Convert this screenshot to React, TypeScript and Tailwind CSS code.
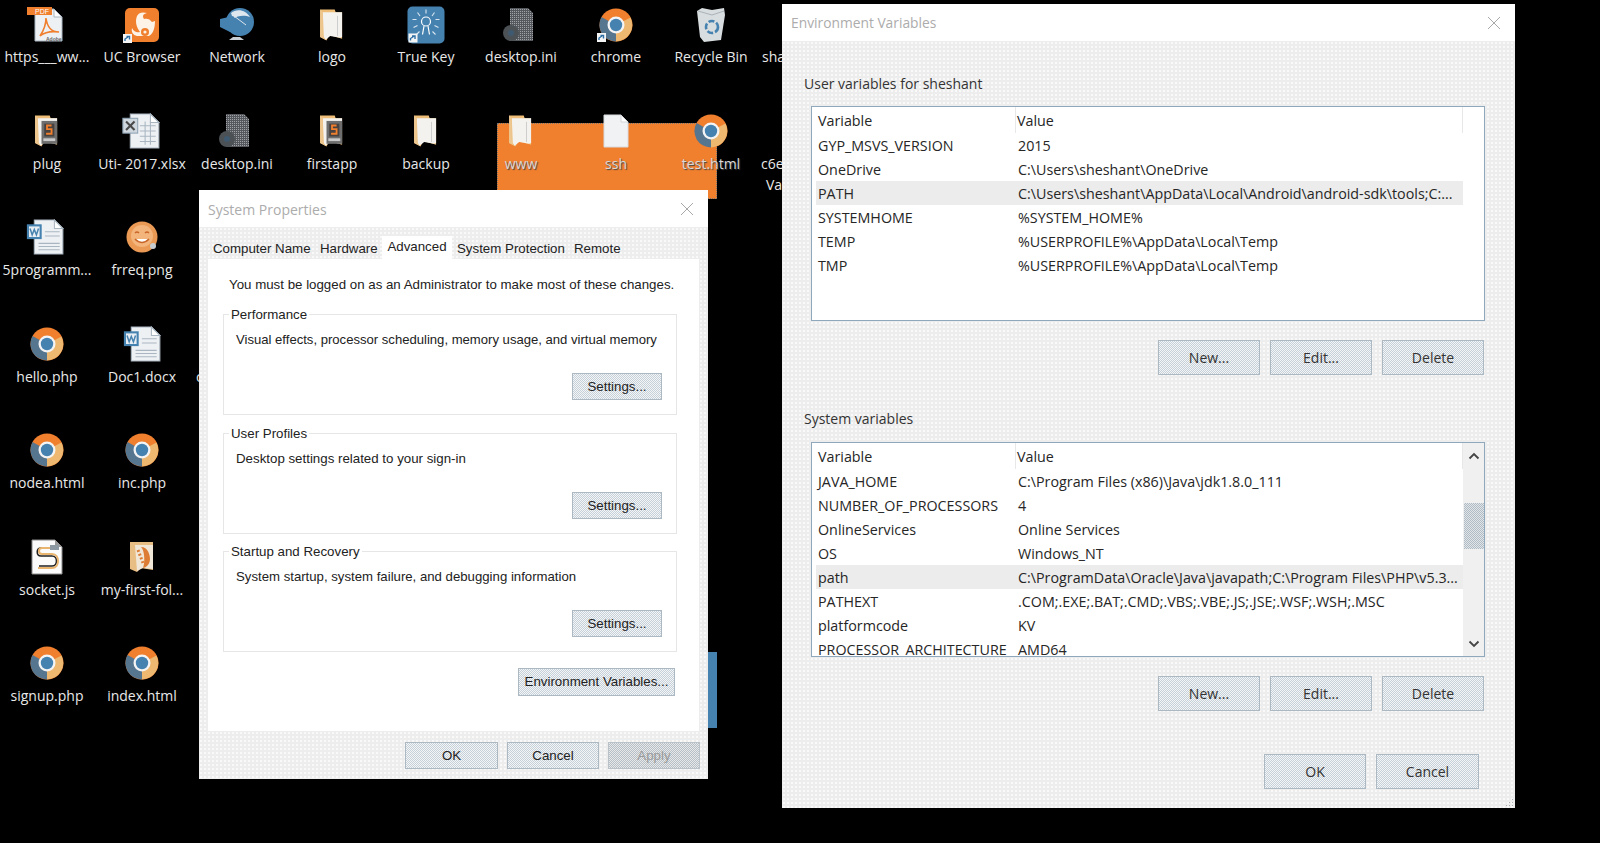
import React from "react";

const seg = "font-['Open_Sans','Noto_Sans',sans-serif]";
const ari = "font-['Liberation_Sans',Arial,sans-serif]";
const btnBg =
  "bg-[repeating-conic-gradient(#c6d0d8_0_25%,#f4f5f6_0_50%)] bg-[length:2px_2px] border border-[#adb9c2]";
const dialogBg =
  "bg-[#ededed] bg-[radial-gradient(circle,#fafafa_0.7px,transparent_0.9px)] bg-[length:4px_4px]";

const Shortcut = ({ x, y }: { x: number; y: number }) => (
  <g transform={`translate(${x} ${y})`}>
    <rect width="9" height="9" fill="#f4f4f4" />
    <path d="M2 7 L2 5 L5 3 M3.5 2.5 H6.5 V5.5" stroke="#2c6ea5" strokeWidth="1.4" fill="none" />
  </g>
);

const Chrome = ({ s = 34, shortcut = false }: { s?: number; shortcut?: boolean }) => (
  <svg width={s} height={s} viewBox="0 0 34 34" className="overflow-visible">
    <circle cx="17" cy="17" r="16.5" fill="#f07f2e" />
    <path d="M17 17 L31.5 9.5 A16.5 16.5 0 0 1 17 33.5 Z" fill="#eeb870" />
    <path d="M17 17 L2.5 9 A16.5 16.5 0 0 0 17 33.5 Z" fill="#56758f" />
    <circle cx="17" cy="17" r="8.5" fill="#f4f4f4" />
    <circle cx="17" cy="17" r="6.2" fill="#4682b0" />
    {shortcut && <Shortcut x={-2} y={25} />}
  </svg>
);

const Folder = ({ inner }: { inner?: React.ReactNode }) => (
  <svg width="26" height="33" viewBox="0 0 28 36">
    <path d="M1 1 H17 L18 4 H25 V33 L11 29 L8 35 L1 31 Z" fill="#eebd78" />
    <path d="M4 4 H25 V31 L23 32 L12 30 L7 34 L5 31 Z" fill="#f4f2ee" />
    <path d="M1 1 L4 4 V30 L7 34 L1 31 Z" fill="#edc78f" />
    <path d="M20 8 V30" stroke="#c9c9c9" />
    {inner}
  </svg>
);

const FolderSub = () => (
  <Folder
    inner={
      <>
        <rect x="8" y="7" width="17" height="25" fill="#6e6e6e" />
        <rect x="11" y="10" width="11" height="14" fill="#47423f" />
        <path d="M19 12 H14 V16 H19 V21 H13" stroke="#f07f2e" strokeWidth="2" fill="none" />
        <rect x="10" y="26" width="13" height="3" fill="#c9c9c9" />
      </>
    }
  />
);

const FilePage = ({ children, w = 34, h = 34 }: { children?: React.ReactNode; w?: number; h?: number }) => (
  <svg width={w} height={h} viewBox="0 0 34 34" className="overflow-visible">
    <path d="M5 1 H24 L32 9 V33 H5 Z" fill="#eef1f4" stroke="#a9b6c1" />
    <path d="M24 1 V9 H32 Z" fill="#fff" stroke="#a9b6c1" />
    {children}
  </svg>
);

const Pdf = () => (
  <FilePage>
    <rect x="-3" y="-1" width="25" height="8" fill="#f07f2e" />
    <text x="5" y="6" fontSize="7" fill="#fff" fontFamily="Liberation Sans">PDF</text>
    <path d="M10 28 C14 22 16 14 16 10 C17 18 21 24 29 24 C22 23 15 24 10 28 Z" fill="none" stroke="#f07f2e" strokeWidth="1.6" />
    <text x="16" y="33" fontSize="5" fontWeight="700" fill="#666" fontFamily="Liberation Sans">Adobe</text>
  </FilePage>
);

const Uc = () => (
  <svg width="34" height="34" viewBox="0 0 34 34" className="overflow-visible">
    <rect width="34" height="34" rx="5" fill="#f07f2e" />
    <path d="M12 8 C14 4 18 4 22 5 C18 6 17 8 19 11 C22 10 25 11 27 14 L30 13 C30 20 28 26 24 28 H12 C8 27 6 24 7 20 C9 24 12 25 15 24 C11 19 10 13 12 8 Z" fill="#fdf3e7" />
    <circle cx="20" cy="24" r="4" fill="#f07f2e" />
    <circle cx="20" cy="24" r="1.6" fill="#fdf3e7" />
    <Shortcut x={-2} y={26} />
  </svg>
);

const Globe = () => (
  <svg width="34" height="36" viewBox="0 0 34 36">
    <circle cx="20" cy="15" r="14" fill="#4682b0" />
    <path d="M11 6 C17 1 26 3 30 10 C25 8 18 8 13 12 Z" fill="#dfe7ee" />
    <path d="M0 12 L13 9 L24 21 L22 25 L10 25 L0 20 Z" fill="#4682b0" />
    <path d="M9 33 H24 L20 30 H13 Z" fill="#c9ced2" />
    <path d="M14 9 L26 18" stroke="#dfe7ee" />
  </svg>
);

const TrueKey = () => (
  <svg width="37" height="37" viewBox="0 0 37 37" className="overflow-visible">
    <rect width="37" height="37" rx="5" fill="#4682b0" />
    <circle cx="18.5" cy="15" r="4.5" fill="none" stroke="#fff" strokeWidth="1.2" />
    <path d="M16.5 19.5 L15 28 M20.5 19.5 L22 28" stroke="#fff" strokeWidth="1.2" />
    <g stroke="#dbe7f0" strokeWidth="1.1">
      <path d="M18.5 3 V7 M10 6 L12.5 9.5 M27 6 L24.5 9.5 M5 13 H9 M28 13 H32 M6 21 L10 19 M31 21 L27 19 M9 28 L12 25 M28 28 L25 25" />
    </g>
    <Shortcut x={1} y={27} />
  </svg>
);

const Gear = () => (
  <svg width="32" height="36" viewBox="0 0 32 36">
    <defs>
      <pattern id="gd" width="2" height="2" patternUnits="userSpaceOnUse">
        <rect width="2" height="2" fill="#55595d" />
        <rect width="1" height="1" fill="#a0a4a8" />
      </pattern>
    </defs>
    <path d="M8 1 H26 L31 6 V34 H8 Z" fill="url(#gd)" />
    <circle cx="9" cy="26" r="8" fill="#4c5155" />
    <circle cx="9" cy="26" r="3" fill="#3f5a70" />
  </svg>
);

const Recycle = () => (
  <svg width="30" height="36" viewBox="0 0 30 36">
    <path d="M1 4 L6 1 L16 3 L28 1 L29 8 L25 33 L8 35 L4 30 Z" fill="#d8dde0" />
    <path d="M2 4 L16 8 L28 4" stroke="#aab2b8" fill="none" />
    <circle cx="16" cy="20" r="6" fill="none" stroke="#4682b0" strokeWidth="2.6" strokeDasharray="6 2" />
  </svg>
);

const Xlsx = () => (
  <FilePage w={36} h={36}>
    <rect x="-2" y="5" width="14" height="14" fill="#cfd8df" stroke="#8fa3b3" />
    <path d="M1 8 L9 16 M9 8 L1 16" stroke="#4a4a4a" strokeWidth="2" />
    <path d="M14 12 H29 M14 17 H29 M14 22 H29 M14 27 H29 M19 8 V30 M24 8 V30" stroke="#a9b6c1" />
  </FilePage>
);

const Docx = () => (
  <FilePage w={36} h={36}>
    <rect x="-2" y="5" width="14" height="14" fill="#4682b0" />
    <rect x="0" y="7" width="10" height="10" fill="#e8eef3" />
    <path d="M1 9 L3 15 L5 10 L7 15 L9 9" stroke="#4682b0" strokeWidth="1.4" fill="none" />
    <path d="M9 23 H29 M9 26 H29 M9 29 H29 M15 12 H29 M15 16 H29" stroke="#a9b6c1" />
  </FilePage>
);

const Smile = () => (
  <svg width="32" height="32" viewBox="0 0 32 32">
    <circle cx="16" cy="16" r="15.5" fill="#eb9a55" />
    <circle cx="16" cy="15" r="11" fill="#f3b57c" />
    <path d="M9 12 Q11 10 13 12 M19 12 Q21 10 23 12" stroke="#c9662a" strokeWidth="1.4" fill="none" />
    <path d="M9 18 Q16 25 23 18" stroke="#c9662a" strokeWidth="1.6" fill="#fff" />
    <circle cx="27" cy="25" r="3" fill="#c7ccd0" />
  </svg>
);

const Js = () => (
  <svg width="32" height="36" viewBox="0 0 32 36">
    <path d="M1 1 H24 L31 8 V35 H1 Z" fill="#fbfbfb" stroke="#8c8c8c" />
    <path d="M24 1 V8 H31 Z" fill="#9a9a9a" />
    <path d="M23 9 H10 C5 9 5 17 10 17 H21 C27 17 27 27 21 27 H8" stroke="#222" strokeWidth="1.6" fill="none" />
    <path d="M21 9 H11 C7 9 7 15 11 15 H21 C29 15 29 29 21 29 H7" stroke="#e9b46e" strokeWidth="2" fill="none" />
    <rect x="19" y="6" width="9" height="5" fill="#8e9aa3" />
  </svg>
);

const FolderOrange = () => (
  <svg width="26" height="32" viewBox="0 0 26 32">
    <path d="M1 1 H24 V29 L12 27 L8 31 L1 28 Z" fill="#e9be84" />
    <path d="M6 4 H24 V28 L14 27 L8 30 Z" fill="#f1e7d8" />
    <path d="M12 6 C19 6 21 14 21 18 C21 24 16 27 14 27 C16 22 16 10 12 6 Z" fill="#dd7d35" />
    <path d="M9 9 L14 22" stroke="#dd7d35" strokeWidth="3" strokeDasharray="2 2" />
  </svg>
);

const BlankFile = () => (
  <svg width="26" height="34" viewBox="0 0 26 34">
    <path d="M1 1 H18 L25 8 V33 H1 Z" fill="#f1f2f3" stroke="#d8dbde" />
    <path d="M18 1 V8 H25 Z" fill="#fff" stroke="#d0d4d8" />
  </svg>
);

type Item = { x: number; ix?: number; iy: number; ly: number; label: string; icon: React.ReactNode; sel?: boolean };

const col = [47, 142, 237, 332, 426, 521, 616, 711];
const items: Item[] = [
  { x: col[0], iy: 25, ly: 57, label: "https___ww...", icon: <Pdf /> },
  { x: col[1], iy: 25, ly: 57, label: "UC Browser", icon: <Uc /> },
  { x: col[2], iy: 25, ly: 57, label: "Network", icon: <Globe /> },
  { x: col[3], iy: 25, ly: 57, label: "logo", icon: <Folder /> },
  { x: col[4], iy: 25, ly: 57, label: "True Key", icon: <TrueKey /> },
  { x: col[5], ix: -3, iy: 25, ly: 57, label: "desktop.ini", icon: <Gear /> },
  { x: col[6], iy: 25, ly: 57, label: "chrome", icon: <Chrome shortcut /> },
  { x: col[7], iy: 25, ly: 57, label: "Recycle Bin", icon: <Recycle /> },
  { x: col[0], iy: 131, ly: 164, label: "plug", icon: <FolderSub /> },
  { x: col[1], ix: 1, iy: 131, ly: 164, label: "Uti- 2017.xlsx", icon: <Xlsx /> },
  { x: col[2], ix: -3, iy: 131, ly: 164, label: "desktop.ini", icon: <Gear /> },
  { x: col[3], iy: 131, ly: 164, label: "firstapp", icon: <FolderSub /> },
  { x: col[4], iy: 131, ly: 164, label: "backup", icon: <Folder /> },
  { x: col[5], iy: 131, ly: 164, label: "www", icon: <Folder />, sel: true },
  { x: col[6], iy: 131, ly: 164, label: "ssh", icon: <BlankFile />, sel: true },
  { x: col[7], iy: 131, ly: 164, label: "test.html", icon: <Chrome />, sel: true },
  { x: col[0], iy: 237, ly: 270, label: "5programm...", icon: <Docx /> },
  { x: col[1], iy: 237, ly: 270, label: "frreq.png", icon: <Smile /> },
  { x: col[0], iy: 344, ly: 377, label: "hello.php", icon: <Chrome /> },
  { x: col[1], ix: 2, iy: 344, ly: 377, label: "Doc1.docx", icon: <Docx /> },
  { x: col[0], iy: 450, ly: 483, label: "nodea.html", icon: <Chrome /> },
  { x: col[1], iy: 450, ly: 483, label: "inc.php", icon: <Chrome /> },
  { x: col[0], iy: 557, ly: 590, label: "socket.js", icon: <Js /> },
  { x: col[1], iy: 557, ly: 590, label: "my-first-fol...", icon: <FolderOrange /> },
  { x: col[0], iy: 663, ly: 696, label: "signup.php", icon: <Chrome /> },
  { x: col[1], iy: 663, ly: 696, label: "index.html", icon: <Chrome /> },
];

const DesktopIcon = ({ it }: { it: Item }) => (
  <>
    <div className="absolute -translate-x-1/2 -translate-y-1/2" style={{ left: it.x + (it.ix ?? 0), top: it.iy }}>
      {it.icon}
    </div>
    <div
      className={`absolute -translate-x-1/2 -translate-y-1/2 whitespace-nowrap text-[14px] leading-[20px] ${seg} ${
        it.sel ? "text-[#d8d8d8] [text-shadow:1px_1px_1px_#444]" : "text-[#e8e8e8]"
      }`}
      style={{ left: it.x, top: it.ly }}
    >
      {it.label}
    </div>
  </>
);

const Close = () => (
  <svg width="14" height="14" viewBox="0 0 14 14">
    <path d="M1 1 L13 13 M13 1 L1 13" stroke="#a8a8a8" strokeWidth="1" />
  </svg>
);

const WinBtn = ({ label, className = "" }: { label: string; className?: string }) => (
  <div className={`flex items-center justify-center ${btnBg} ${className}`}>{label}</div>
);

type Row = [string, string];

const VarList = ({ rows, sel, scroll }: { rows: Row[]; sel: number; scroll?: boolean }) => (
  <div className={`ml-[7px] flex h-[215px] w-[674px] overflow-hidden border border-[#8fa8bb] bg-white text-[14.3px] leading-[24px] text-[#262626] ${seg}`}>
    <div className="flex min-w-0 flex-1 flex-col overflow-hidden pl-[4px]">
      <div className="grid h-[26px] shrink-0 grid-cols-[200px_1fr] border-r border-[#e8e8e8]">
        <div className="flex items-center border-r border-[#e8e8e8] pt-[2px] pl-[2px]">Variable</div>
        <div className="flex items-center pt-[2px] pl-[1px]">Value</div>
      </div>
      {rows.map((r, i) => (
        <div
          key={r[0]}
          className={`grid h-[24px] shrink-0 grid-cols-[200px_1fr] whitespace-nowrap ${i === sel ? "bg-[#ececec]" : ""}`}
        >
          <div className="overflow-hidden pt-[1px] pl-[2px]">{r[0]}</div>
          <div className="overflow-hidden pt-[1px] pl-[2px]">{r[1]}</div>
        </div>
      ))}
    </div>
    <div className={`flex w-[21px] shrink-0 flex-col items-center ${scroll ? "bg-[#f0f0f0]" : ""}`}>
      {scroll && (
        <>
          <svg width="12" height="8" viewBox="0 0 12 8" className="mt-[9px] shrink-0">
            <path d="M1.5 6.5 L6 2 L10.5 6.5" stroke="#444" strokeWidth="1.8" fill="none" />
          </svg>
          <div className="mt-[43px] h-[46px] w-[20px] shrink-0 bg-[repeating-conic-gradient(#aebbc5_0_25%,#e2e6e9_0_50%)] bg-[length:2px_2px]" />
          <svg width="12" height="8" viewBox="0 0 12 8" className="mt-auto mb-[8px] shrink-0">
            <path d="M1.5 1.5 L6 6 L10.5 1.5" stroke="#444" strokeWidth="1.8" fill="none" />
          </svg>
        </>
      )}
    </div>
  </div>
);

const userRows: Row[] = [
  ["GYP_MSVS_VERSION", "2015"],
  ["OneDrive", "C:\\Users\\sheshant\\OneDrive"],
  ["PATH", "C:\\Users\\sheshant\\AppData\\Local\\Android\\android-sdk\\tools;C:..."],
  ["SYSTEMHOME", "%SYSTEM_HOME%"],
  ["TEMP", "%USERPROFILE%\\AppData\\Local\\Temp"],
  ["TMP", "%USERPROFILE%\\AppData\\Local\\Temp"],
];
const sysRows: Row[] = [
  ["JAVA_HOME", "C:\\Program Files (x86)\\Java\\jdk1.8.0_111"],
  ["NUMBER_OF_PROCESSORS", "4"],
  ["OnlineServices", "Online Services"],
  ["OS", "Windows_NT"],
  ["path", "C:\\ProgramData\\Oracle\\Java\\javapath;C:\\Program Files\\PHP\\v5.3..."],
  ["PATHEXT", ".COM;.EXE;.BAT;.CMD;.VBS;.VBE;.JS;.JSE;.WSF;.WSH;.MSC"],
  ["platformcode", "KV"],
  ["PROCESSOR_ARCHITECTURE", "AMD64"],
];

const BtnRow = () => (
  <div className={`mt-[19px] flex w-[680px] justify-end gap-[10px] text-[14px] text-[#333] ${seg}`}>
    <WinBtn label="New..." className="h-[35px] w-[102px]" />
    <WinBtn label="Edit..." className="h-[35px] w-[102px]" />
    <WinBtn label="Delete" className="h-[35px] w-[102px]" />
  </div>
);

const EnvWindow = () => (
  <div className="absolute top-[4px] left-[782px] flex h-[804px] w-[733px] flex-col bg-white">
    <div className={`flex h-[37px] shrink-0 items-center justify-between pr-[14px] pl-[9px] text-[13.8px] text-[#acacac] ${seg}`}>
      <span className="pt-[2px]">Environment Variables</span>
      <Close />
    </div>
    <div className={`relative flex-1 pl-[22px] ${dialogBg}`}>
      <div className={`pt-[33px] text-[14px] leading-[20px] text-[#333] ${seg}`}>User variables for sheshant</div>
      <div className="mt-[12px]">
        <VarList rows={userRows} sel={2} />
      </div>
      <BtnRow />
      <div className={`mt-[34px] text-[14px] leading-[20px] text-[#333] ${seg}`}>System variables</div>
      <div className="mt-[13px]">
        <VarList rows={sysRows} sel={4} scroll />
      </div>
      <BtnRow />
      <div className={`mt-[43px] flex w-[675px] justify-end gap-[10px] text-[14px] text-[#333] ${seg}`}>
        <WinBtn label="OK" className="h-[35px] w-[102px]" />
        <WinBtn label="Cancel" className="h-[35px] w-[103px]" />
      </div>
      <svg width="12" height="12" viewBox="0 0 12 12" className="absolute right-0 bottom-0">
        <path d="M9 3 h1 v1 h-1z M6 6 h1 v1 h-1z M9 6 h1 v1 h-1z M3 9 h1 v1 h-1z M6 9 h1 v1 h-1z M9 9 h1 v1 h-1z" fill="#a8b0b6" />
      </svg>
    </div>
  </div>
);

const Group = ({ title, text, textClass }: { title: string; text: string; textClass: string }) => (
  <div className="relative ml-[15px] h-[101px] w-[454px] border border-[#e6e6e6]">
    <span className="absolute -top-[8px] left-[5px] bg-white px-[2px] leading-[16px]">{title}</span>
    <div className={`pt-[16px] pl-[12px] leading-[18px] ${textClass}`}>{text}</div>
    <div className="mt-[24px] flex justify-end pr-[14px]">
      <WinBtn label="Settings..." className="h-[27px] w-[90px]" />
    </div>
  </div>
);

const SysWindow = () => (
  <div className={`absolute top-[190px] left-[199px] flex h-[589px] w-[509px] flex-col bg-white text-[13.3px] text-[#222] ${ari}`}>
    <div className={`flex h-[37px] shrink-0 items-center justify-between pr-[14px] pl-[9px] text-[14px] text-[#acacac] ${seg}`}>
      <span className="pt-[2px]">System Properties</span>
      <Close />
    </div>
    <div className={`flex flex-1 flex-col ${dialogBg}`}>
      <div className="flex h-[32px] shrink-0 items-end pl-[14px] leading-[22px]">
        <span className="-mb-[1px] w-[107px]">Computer Name</span>
        <span className="-mb-[1px] w-[62px]">Hardware</span>
        <span className="flex h-[23px] w-[70px] items-start justify-center bg-white">Advanced</span>
        <span className="-mb-[1px] ml-[5px] w-[117px]">System Protection</span>
        <span className="-mb-[1px]">Remote</span>
      </div>
      <div className="mx-[9px] h-[472px] shrink-0 bg-white">
        <div className="pt-[16px] pl-[21px] leading-[20px]">You must be logged on as an Administrator to make most of these changes.</div>
        <div className="mt-[19px]">
          <Group title="Performance" text="Visual effects, processor scheduling, memory usage, and virtual memory" textClass="text-[13.1px]" />
        </div>
        <div className="mt-[18px]">
          <Group title="User Profiles" text="Desktop settings related to your sign-in" textClass="text-[13.3px]" />
        </div>
        <div className="mt-[17px]">
          <Group title="Startup and Recovery" text="System startup, system failure, and debugging information" textClass="text-[13.2px]" />
        </div>
        <div className="mt-[16px] flex justify-end pr-[24px]">
          <WinBtn label="Environment Variables..." className="h-[28px] w-[157px]" />
        </div>
      </div>
      <div className="mt-[11px] flex justify-end gap-[9px] pr-[8px]">
        <WinBtn label="OK" className="h-[27px] w-[93px]" />
        <WinBtn label="Cancel" className="h-[27px] w-[92px]" />
        <div className="flex h-[27px] w-[92px] items-center justify-center border border-[#b9c2c9] bg-[repeating-conic-gradient(#b4bfc7_0_25%,#e8e8e8_0_50%)] bg-[length:2px_2px] text-[#9a9a9a]">Apply</div>
      </div>
    </div>
  </div>
);

export default function App() {
  return (
    <div className="relative h-[843px] w-[1600px] overflow-hidden bg-black">
      <div className="absolute top-[123px] left-[497px] h-[76px] w-[220px] border border-dotted border-[#777] bg-[#f07f2e]" />
      <div className="absolute top-[652px] left-[700px] h-[76px] w-[17px] bg-[#4682b0]" />
      {items.map((it) => (
        <DesktopIcon key={it.label + it.x + it.ly} it={it} />
      ))}
      <div className={`absolute top-[47px] left-[762px] text-[14px] leading-[20px] text-[#e8e8e8] ${seg}`}>sha</div>
      <div className={`absolute top-[154px] left-[761px] text-[14px] leading-[20px] text-[#e8e8e8] ${seg}`}>c6e</div>
      <div className={`absolute top-[175px] left-[766px] text-[14px] leading-[20px] text-[#e8e8e8] ${seg}`}>Va</div>
      <div className={`absolute top-[367px] left-[196px] text-[14px] leading-[20px] text-[#e8e8e8] ${seg}`}>c</div>
      <SysWindow />
      <EnvWindow />
    </div>
  );
}
